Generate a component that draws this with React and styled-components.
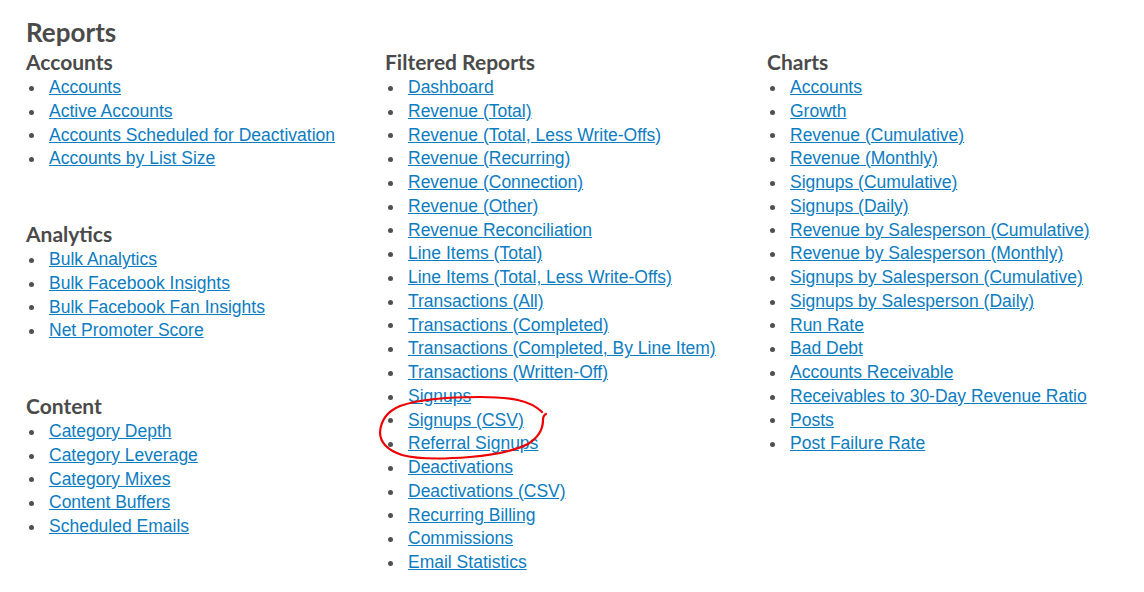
import React from 'react';
import styled, { createGlobalStyle } from 'styled-components';

const GlobalStyle = createGlobalStyle`
    html, body {
        margin: 0;
        padding: 0;
        background: #ffffff;
    }
`

const Page = styled.div`
    position: relative;
    box-sizing: border-box;
    height: 592px;
    overflow: hidden;
    padding: 16px 0 0 26px;
    font-family: "Liberation Sans", Arial, sans-serif;
`

const Title = styled.h1`
    margin: 0;
    font-family: Lato, "Open Sans", sans-serif;
    font-weight: 700;
    font-size: 26px;
    line-height: 32px;
    color: #4a4a4a;
`

const Columns = styled.div`
    display: grid;
    grid-template-columns: 359px 382px 1fr;
`

const Section = styled.section`
    margin-bottom: 49px;
`

const Heading = styled.h2`
    margin: 0;
    font-family: Lato, "Open Sans", sans-serif;
    font-weight: 700;
    font-size: 21px;
    line-height: 28px;
    color: #4a4a4a;
`

const List = styled.ul`
    margin: 0;
    padding: 0;
    list-style: none;
`

const Item = styled.li`
    display: flex;
    align-items: center;
    font-size: 17.5px;
    line-height: 23.75px;

    &::before {
        content: "";
        flex: none;
        width: 5px;
        height: 5px;
        border-radius: 50%;
        background: #505050;
        margin: 1px 15px 0 3px;
    }
`

const Link = styled.a`
    color: #0d7cc1;
    text-decoration: underline;
    white-space: nowrap;
`

const Scribble = styled.svg`
    position: absolute;
    left: 0;
    top: 0;
    pointer-events: none;
`

const columns = [
    [
        { title: 'Accounts', items: ['Accounts', 'Active Accounts', 'Accounts Scheduled for Deactivation', 'Accounts by List Size'] },
        { title: 'Analytics', items: ['Bulk Analytics', 'Bulk Facebook Insights', 'Bulk Facebook Fan Insights', 'Net Promoter Score'] },
        { title: 'Content', items: ['Category Depth', 'Category Leverage', 'Category Mixes', 'Content Buffers', 'Scheduled Emails'] },
    ],
    [
        {
            title: 'Filtered Reports',
            items: [
                'Dashboard', 'Revenue (Total)', 'Revenue (Total, Less Write-Offs)', 'Revenue (Recurring)',
                'Revenue (Connection)', 'Revenue (Other)', 'Revenue Reconciliation', 'Line Items (Total)',
                'Line Items (Total, Less Write-Offs)', 'Transactions (All)', 'Transactions (Completed)',
                'Transactions (Completed, By Line Item)', 'Transactions (Written-Off)', 'Signups', 'Signups (CSV)',
                'Referral Signups', 'Deactivations', 'Deactivations (CSV)', 'Recurring Billing', 'Commissions',
                'Email Statistics',
            ],
        },
    ],
    [
        {
            title: 'Charts',
            items: [
                'Accounts', 'Growth', 'Revenue (Cumulative)', 'Revenue (Monthly)', 'Signups (Cumulative)',
                'Signups (Daily)', 'Revenue by Salesperson (Cumulative)', 'Revenue by Salesperson (Monthly)',
                'Signups by Salesperson (Cumulative)', 'Signups by Salesperson (Daily)', 'Run Rate', 'Bad Debt',
                'Accounts Receivable', 'Receivables to 30-Day Revenue Ratio', 'Posts', 'Post Failure Rate',
            ],
        },
    ],
]

const App = () => {
    return (
        <Page>
            <GlobalStyle />
            <Title>Reports</Title>
            <Columns>
                {columns.map((col, i) => (
                    <div key={i}>
                        {col.map((sec) => (
                            <Section key={sec.title}>
                                <Heading>{sec.title}</Heading>
                                <List>
                                    {sec.items.map((item) => (
                                        <Item key={item}>
                                            <Link href="#">{item}</Link>
                                        </Item>
                                    ))}
                                </List>
                            </Section>
                        ))}
                    </div>
                ))}
            </Columns>
            <Scribble width="1144" height="592" viewBox="0 0 1144 592">
                <path
                    d="M542 412 C530 400 510 397 480 397 C450 397 420 399 400 406 C388 411 381 420 380 432 C380 442 387 450 402 455 C420 460 445 459 470 457 C495 455 516 450 528 444 C539 437 543 428 543 420 C543 417 544 415 546 414"
                    fill="none"
                    stroke="#ee0000"
                    strokeWidth="2.2"
                    strokeLinecap="round"
                />
            </Scribble>
        </Page>
    )
}

export default App;
